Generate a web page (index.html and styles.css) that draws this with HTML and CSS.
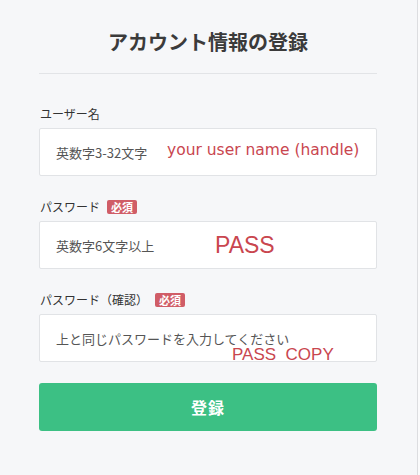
FILE: index.html
```html
<!DOCTYPE html>
<html lang="ja">
<head>
<meta charset="utf-8">
<title>アカウント情報の登録</title>
<link rel="stylesheet" href="styles.css">
</head>
<body>
<div class="page">
  <h1 class="title">アカウント情報の登録</h1>
  <hr class="divider">
  <form class="form">
    <div class="field">
      <label class="label">ユーザー名</label>
      <div class="box">
        <input class="input" type="text" placeholder="英数字3-32文字">
        <span class="note note-user">your user name (handle)</span>
      </div>
    </div>
    <div class="field">
      <label class="label">パスワード<span class="badge">必須</span></label>
      <div class="box">
        <input class="input" type="password" placeholder="英数字6文字以上">
        <span class="note note-pass">PASS</span>
      </div>
    </div>
    <div class="field">
      <label class="label">パスワード（確認）<span class="badge">必須</span></label>
      <div class="box">
        <input class="input" type="password" placeholder="上と同じパスワードを入力してください">
        <span class="note note-copy">PASS&nbsp;&nbsp;COPY</span>
      </div>
    </div>
    <button class="submit" type="button">登録</button>
  </form>
</div>
</body>
</html>
```
FILE: styles.css
```css
html, body {
  margin: 0;
  padding: 0;
}
body {
  background: #fbfbfc;
  font-family: "Noto Sans CJK JP", "Noto Sans", sans-serif;
  color: #333;
}
.page {
  width: 418px;
  height: 475px;
  box-sizing: border-box;
  background: #f6f7f9;
  border-right: 1px solid #dcdde0;
  padding: 28px 40px 0 39px;
}
.title {
  margin: 0;
  font-size: 20px;
  line-height: 28px;
  font-weight: 700;
  text-align: center;
  color: #3b3b3b;
}
.divider {
  margin: 17px 0 0;
  border: 0;
  border-top: 1px solid #e2e4e7;
  height: 0;
}
.form {
  display: flex;
  flex-direction: column;
  padding-top: 30px;
}
.field + .field {
  margin-top: 21px;
}
.label {
  display: flex;
  align-items: center;
  height: 19px;
  margin-bottom: 5px;
  padding-left: 1px;
  font-size: 12px;
  color: #333;
}
.badge {
  margin-left: 7px;
  width: 30px;
  height: 14px;
  border-radius: 2px;
  background: #d05d67;
  color: #fff;
  font-size: 11px;
  font-weight: 700;
  line-height: 14px;
  text-align: center;
}
.box {
  position: relative;
}
.input {
  display: block;
  width: 100%;
  height: 48px;
  box-sizing: border-box;
  margin: 0;
  padding: 0 16px;
  background: #fff;
  border: 1px solid #e1e3e6;
  border-radius: 2px;
  font-family: "Noto Sans CJK JP", "Noto Sans", sans-serif;
  font-size: 13px;
  color: #333;
  outline: none;
}
.input::placeholder {
  color: #555;
}
.note {
  position: absolute;
  color: #c9464f;
  white-space: nowrap;
  pointer-events: none;
}
.note-user {
  left: 128px;
  top: 11px;
  font-family: "DejaVu Sans", sans-serif;
  font-size: 15.5px;
  line-height: 22px;
}
.note-pass {
  left: 176px;
  top: 9px;
  font-family: "Liberation Sans", Arial, sans-serif;
  font-size: 23px;
  line-height: 30px;
}
.note-copy {
  left: 193px;
  top: 31px;
  font-family: "Liberation Sans", Arial, sans-serif;
  font-size: 17px;
  line-height: 20px;
}
.submit {
  margin-top: 21px;
  height: 48px;
  border: 0;
  border-radius: 3px;
  background: #3cc084;
  color: #fff;
  font-family: "Noto Sans CJK JP", "Noto Sans", sans-serif;
  font-size: 16px;
  font-weight: 700;
  letter-spacing: 1px;
  cursor: pointer;
}
```
